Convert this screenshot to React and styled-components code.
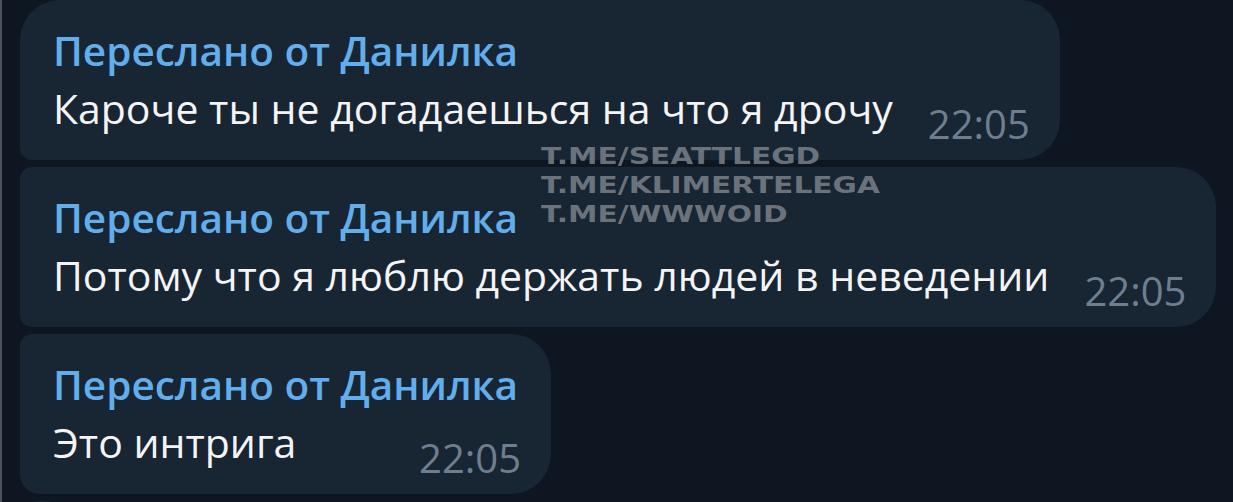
import React from "react";
import styled, { createGlobalStyle } from "styled-components";

const Global = createGlobalStyle`
  html, body {
    margin: 0;
    padding: 0;
    background: #0e1621;
    overflow: hidden;
  }
`;

const Page = styled.div`
  position: relative;
  width: 1233px;
  height: 502px;
  overflow: hidden;
  background: #0e1621;
  border-left: 2px solid #4d525a;
  box-sizing: border-box;
  font-family: "Open Sans", "Noto Sans", sans-serif;
`;

const List = styled.div`
  display: flex;
  flex-direction: column;
  align-items: flex-start;
  gap: 7px;
  padding-left: 18px;
`;

const Bubble = styled.div`
  background: #182533;
  box-sizing: border-box;
  height: 160px;
  padding: 25px 30px 0 33px;
  border-radius: ${(p) => p.$tl}px 40px 40px ${(p) => p.$bl}px;
  display: flex;
  flex-direction: column;
`;

const Name = styled.div`
  color: #62aeec;
  font-size: 40.5px;
  font-weight: 600;
  line-height: 52px;
  margin-bottom: 5px;
  padding-right: 3px;
  white-space: nowrap;
`;

const Line = styled.div`
  display: flex;
  justify-content: space-between;
  align-items: flex-end;
  gap: 35px;
`;

const Text = styled.div`
  color: #f4f4f4;
  font-size: 41px;
  line-height: 52px;
  white-space: nowrap;
`;

const Time = styled.div`
  color: #6d7f8f;
  font-size: 40px;
  line-height: 40px;
  margin-bottom: -10px;
`;

const Watermark = styled.div`
  position: absolute;
  left: 539px;
  top: 142px;
  font-family: "DejaVu Sans", sans-serif;
  font-weight: bold;
  font-size: 23px;
  line-height: 29px;
  color: rgba(130, 136, 144, 0.8);
  transform: scaleX(1.29);
  transform-origin: left top;
`;

const messages = [
  { text: "Кароче ты не догадаешься на что я дрочу", tl: 40, bl: 12 },
  { text: "Потому что я люблю держать людей в неведении", tl: 12, bl: 12 },
  { text: "Это интрига", tl: 12, bl: 20 },
];

export default function App() {
  return (
    <Page>
      <Global />
      <List>
        {messages.map((m, i) => (
          <Bubble key={i} $tl={m.tl} $bl={m.bl}>
            <Name>Переслано от Данилка</Name>
            <Line>
              <Text>{m.text}</Text>
              <Time>22:05</Time>
            </Line>
          </Bubble>
        ))}
        <Bubble $tl={20} $bl={12} />
      </List>
      <Watermark>
        T.ME/SEATTLEGD
        <br />
        T.ME/KLIMERTELEGA
        <br />
        T.ME/WWWOID
      </Watermark>
    </Page>
  );
}
